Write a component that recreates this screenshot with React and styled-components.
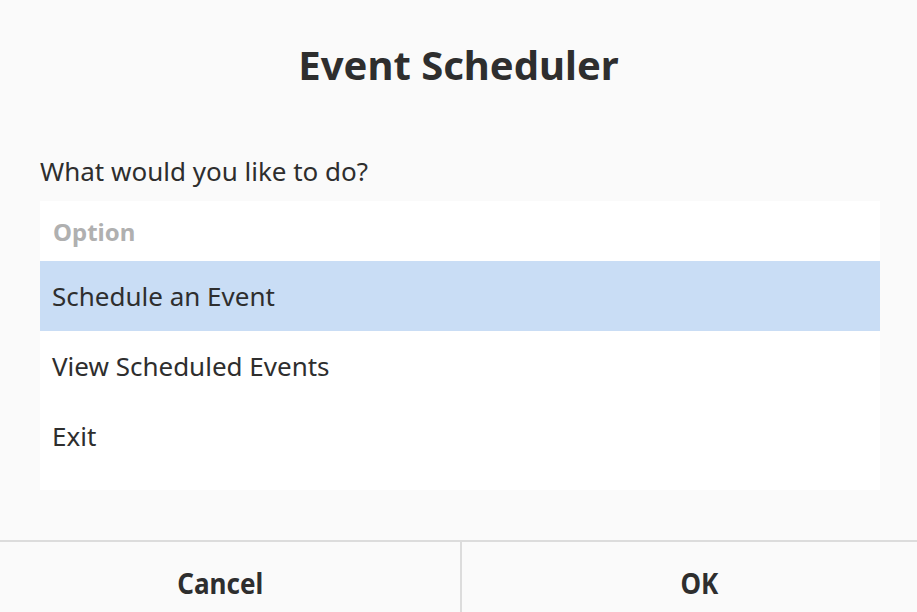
import React from "react";
import styled, { createGlobalStyle } from "styled-components";

const Global = createGlobalStyle`
  html, body { margin: 0; padding: 0; background: #fafafa; }
  body { font-family: "Noto Sans", "Open Sans", sans-serif; color: #2e3436; }
`;

const Dialog = styled.div`
  width: 917px;
  height: 612px;
  display: flex;
  flex-direction: column;
  background: #fafafa;
  overflow: hidden;
`;

const Title = styled.h1`
  margin: 0;
  padding-top: 40px;
  height: 50px;
  text-align: center;
  font-size: 40px;
  line-height: 50px;
  font-weight: 700;
  color: #2e2e2e;
`;

const Body = styled.div`
  flex: 1;
  display: flex;
  flex-direction: column;
  padding: 64px 37px 0 40px;
`;

const Prompt = styled.div`
  font-size: 26px;
  line-height: 34px;
  color: #2e2e2e;
  margin-bottom: 13px;
`;

const List = styled.div`
  background: #ffffff;
  height: 289px;
  display: flex;
  flex-direction: column;
`;

const Header = styled.div`
  height: 60px;
  display: flex;
  align-items: center;
  padding-left: 13px;
  font-size: 24px;
  font-weight: 700;
  color: #b0b0b0;
`;

const Row = styled.div`
  height: 70px;
  display: flex;
  align-items: center;
  padding-left: 12px;
  font-size: 26px;
  color: #2e2e2e;
  background: ${(p) => (p.$selected ? "#c9ddf5" : "transparent")};
`;

const Footer = styled.div`
  height: 70px;
  border-top: 2px solid #dcdcdc;
  display: flex;
`;

const Button = styled.div`
  box-sizing: border-box;
  width: ${(p) => p.$width}px;
  display: flex;
  align-items: center;
  justify-content: center;
  padding-top: 12px;
  padding-left: ${(p) => (p.$shift > 0 ? p.$shift * 2 : 0)}px;
  padding-right: ${(p) => (p.$shift < 0 ? -p.$shift * 2 : 0)}px;
  font-size: 28px;
  font-weight: 700;
  color: #2e2e2e;
  & + & { border-left: 2px solid #dcdcdc; }
  span { display: inline-block; transform: scaleX(0.93); }
`;

export default function App() {
  const options = ["Schedule an Event", "View Scheduled Events", "Exit"];
  return (
    <>
      <Global />
      <Dialog>
        <Title>Event Scheduler</Title>
        <Body>
          <Prompt>What would you like to do?</Prompt>
          <List>
            <Header>Option</Header>
            {options.map((o, i) => (
              <Row key={o} $selected={i === 0}>{o}</Row>
            ))}
          </List>
        </Body>
        <Footer>
          <Button $width={460} $shift={-10}><span>Cancel</span></Button>
          <Button $width={457} $shift={10}><span>OK</span></Button>
        </Footer>
      </Dialog>
    </>
  );
}
